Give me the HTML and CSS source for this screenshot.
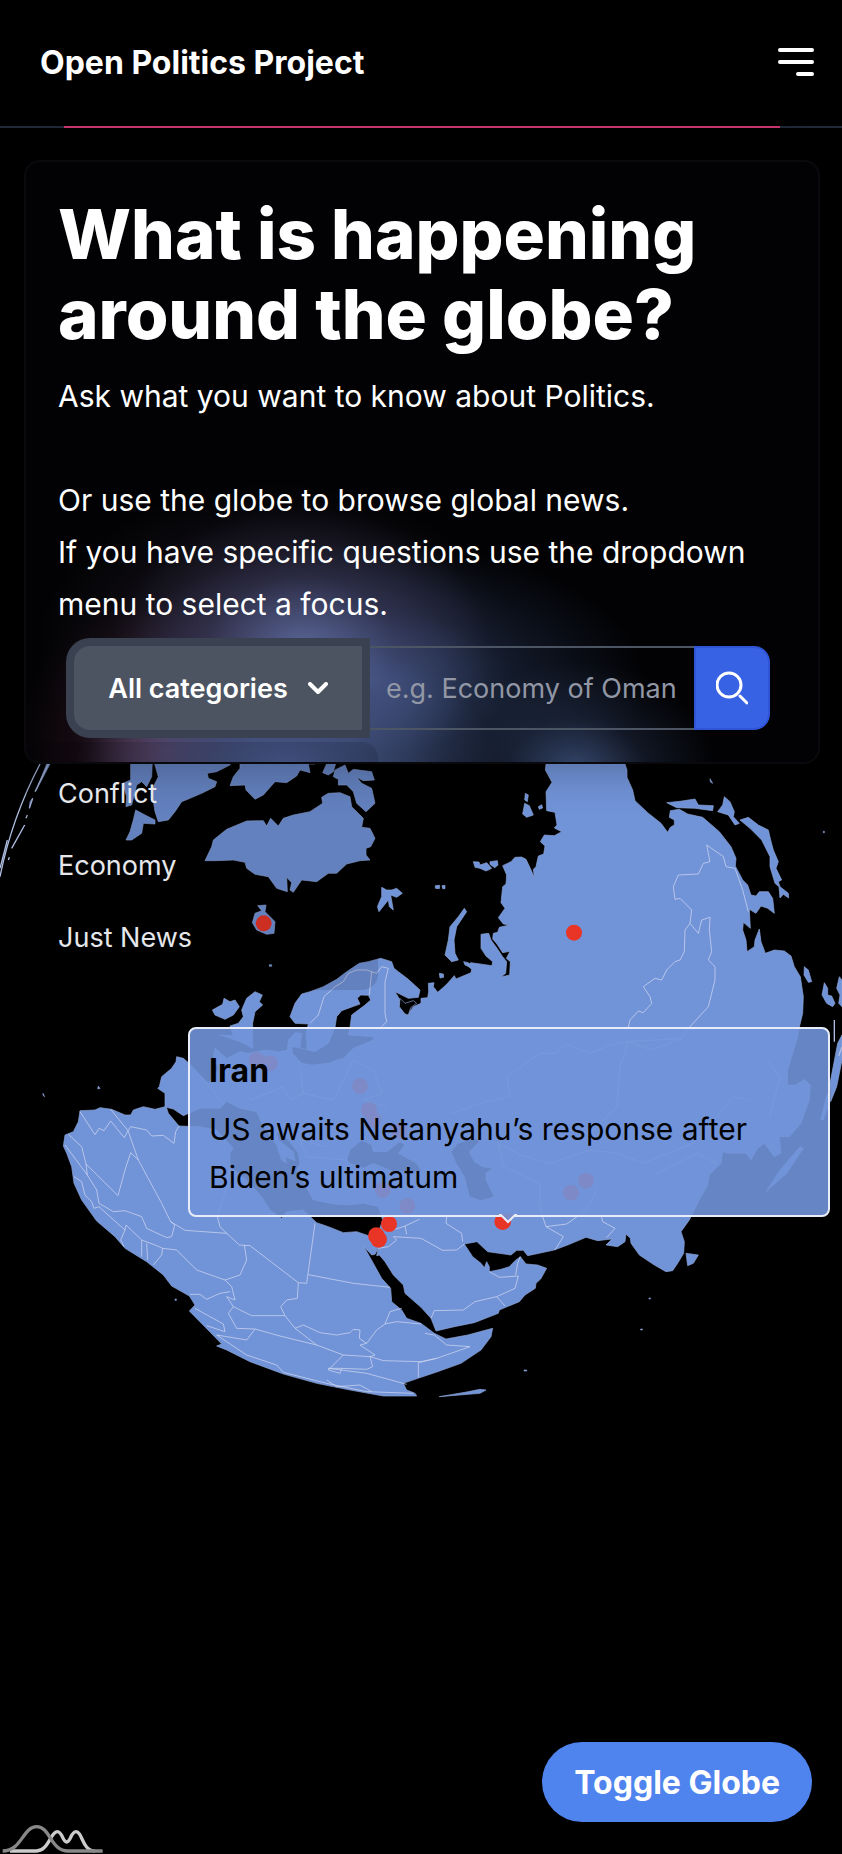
FILE: index.html
```html
<!DOCTYPE html>
<html lang="en">
<head>
<meta charset="utf-8">
<meta name="viewport" content="width=device-width, initial-scale=1">
<title>Open Politics Project</title>
<link rel="stylesheet" href="styles.css">
</head>
<body>
<header class="topbar">
  <a class="brand" href="#">Open Politics Project</a>
  <button class="menu-button" type="button" aria-label="Open menu">
    <svg width="36" height="28" viewBox="0 0 36 28" fill="none" stroke="#fff" stroke-width="4" stroke-linecap="round"><path d="M2 2H34M2 14H34M20 26H34"/></svg>
  </button>
</header>

<main class="stage">
  <svg class="globe" viewBox="0 0 2526 2040" role="img" aria-label="World globe with news locations">
    <g class="land">
      <path d="M1638 40L1638 72L1636 90L1656 127L1638 155L1640 212L1665 217L1671 255L1663 264L1685 275L1663 287L1633 285L1621 305L1635 318L1631 342L1615 348L1608 380L1600 388L1603 413L1591 385L1578 358L1565 351L1545 352L1533 365L1508 377L1520 405L1518 432L1508 440L1503 488L1515 505L1495 533L1510 552L1528 555L1498 562L1493 577L1480 580L1478 597L1491 612L1508 638L1530 634L1519 655L1531 665L1529 705L1503 711L1517 700L1520 665L1508 650L1491 625L1473 600L1466 580L1443 583L1443 625L1458 648L1478 665L1476 677L1413 668L1400 675L1415 688L1413 698L1368 717L1363 707L1338 735L1313 757L1300 740L1302 728L1285 730L1286 755L1283 773L1263 775L1263 790L1240 800L1222 825L1200 800L1200 780L1185 755L1225 775L1255 772L1260 750L1225 718L1195 695L1182 685L1175 665L1142 655L1105 665L1078 670L1040 695L1010 718L970 740L930 755L905 762L885 790L870 830L885 850L925 852L918 880L922 935L900 925L905 880L885 878L865 900L862 930L835 935L800 930L770 935L745 940L720 935L700 945L680 955L645 925L640 950L655 980L650 1000L625 1030L565 968L550 955L530 950L528 965L515 985L485 1010L478 1040L473 1045L495 1060L495 1100L465 1108L430 1100L400 1110L392 1125L375 1125L335 1108L300 1103L285 1110L240 1112L235 1145L220 1175L195 1185L190 1218L200 1240L215 1280L222 1330L245 1380L290 1443L345 1490L375 1525L440 1565L490 1605L515 1638L568 1668L585 1695L568 1713L632 1778L665 1812L650 1818L680 1830L750 1865L850 1902L950 1930L1050 1950L1150 1968L1250 1968L1245 1960L1220 1950L1210 1930L1263 1912L1313 1895L1383 1870L1443 1830L1473 1790L1478 1765L1403 1785L1338 1797L1303 1780L1263 1750L1220 1735L1205 1710L1175 1685L1172 1645L1145 1615L1120 1570L1092 1520L1115 1545L1125 1543L1135 1525L1130 1547L1138 1545L1155 1565L1180 1605L1210 1635L1215 1660L1263 1702L1293 1735L1308 1773L1363 1760L1423 1748L1495 1720L1498 1710L1558 1685L1575 1665L1606 1645L1608 1630L1622 1617L1640 1585L1613 1575L1578 1572L1561 1550L1545 1562L1528 1580L1503 1588L1468 1595L1468 1580L1460 1565L1453 1583L1443 1570L1418 1550L1393 1512L1431 1505L1463 1535L1533 1545L1550 1531L1570 1531L1583 1547L1663 1530L1703 1515L1758 1492L1793 1502L1836 1497L1818 1515L1853 1520L1875 1505L1878 1482L1891 1495L1893 1510L1918 1545L1963 1575L1998 1595L2018 1592L2033 1570L2051 1540L2053 1505L2043 1475L2068 1440L2073 1430L2098 1380L2123 1335L2128 1305L2163 1270L2168 1235L2183 1240L2238 1240L2253 1260L2273 1225L2293 1210L2323 1250L2343 1240L2338 1190L2368 1190L2403 1150L2428 1080L2431 1035L2413 1018L2388 1035L2363 1035L2363 990L2393 890L2398 862L2408 820L2410 770L2401 710L2383 680L2373 648L2353 633L2323 630L2296 640L2283 605L2278 567L2265 600L2263 620L2241 635L2238 600L2228 570L2230 547L2251 565L2248 508L2268 520L2283 498L2303 505L2323 520L2318 475L2305 455L2278 455L2268 468L2253 465L2243 435L2228 420L2206 378L2208 355L2193 320L2158 275L2108 232L2063 222L2038 208L2011 212L2008 232L2023 240L2023 255L2011 262L2003 277L1983 250L1943 218L1905 182L1898 150L1881 112L1881 90L1875 72L1875 40Z"/>
      <path d="M615 362L635 320L640 300L680 268L740 243L790 242L800 258L812 235L835 258L850 235L880 225L930 215L968 190L965 172L985 160L1020 158L1050 170L1055 200L1090 235L1085 262L1110 265L1125 295L1112 320L1098 325L1098 345L1110 360L1080 362L1040 372L1010 400L985 400L950 425L905 420L880 457L870 450L875 428L860 412L862 455L830 445L805 410L765 403L740 385L735 367L700 360L650 362Z"/>
      <path d="M464 40H700L690 75L650 95L622 100L625 115L650 125L645 140L605 160L570 175L545 185L525 215L505 240L475 245L465 215L455 150L475 110L464 72Z"/>
      <path d="M392 40H458L455 110L440 140L425 125L410 135L395 195L378 200L380 170L368 130L392 120ZM407 210L435 225L465 240L465 252L430 250L425 280L395 300L378 300L390 275L400 240Z"/>
      <path d="M720 40H955L945 72L925 72L930 98L900 90L890 108L860 128L825 125L790 165L765 178L738 150L735 135L690 137L700 110L720 85ZM985 60H1010L1000 95L985 105L968 98ZM1005 90L1035 75L1045 100L1060 88L1115 95L1123 120L1090 122L1070 112L1085 130L1115 145L1125 190L1098 215L1070 190L1060 155L1040 135L1015 135L1015 118L1000 110Z"/>
      <path d="M773 497L798 495L795 515L805 525L825 545L822 580L800 583L770 570L757 548L765 520L785 512ZM1145 442L1160 450L1175 450L1190 445L1207 460L1190 472L1172 465L1180 510L1168 500L1165 480L1137 515L1132 500L1145 470Z"/>
      <path d="M637 810L668 793L672 775L690 785L705 780L718 800L700 825L675 838L645 825ZM740 775L765 755L787 765L778 785L788 795L765 815L758 850L758 925L720 905L660 885L700 887L690 858L715 850L730 830L725 810Z"/>
      <path d="M1393 505L1400 515L1370 560L1362 600L1365 640L1375 660L1355 665L1335 645L1345 600L1350 560L1375 530ZM1391 665L1405 668L1408 680L1395 675ZM1420 365L1437 366L1440 375L1460 368L1475 385L1458 393L1440 385L1425 382ZM1470 365L1492 362L1494 375L1484 383L1470 373ZM1576 160L1585 165L1582 185L1574 180ZM1574 190L1588 197L1600 225L1580 232L1568 222ZM1615 200L1625 194L1628 204L1618 208ZM1306 437L1319 436L1318 446L1306 445ZM1326 437L1335 436V446H1328ZM1318 700L1330 702L1331 712L1320 714Z"/>
      <path d="M2000 188L2040 184L2085 177L2095 195L2140 197L2138 212L2085 205L2030 203ZM2173 170L2190 185L2203 215L2200 230L2218 250L2205 255L2185 225L2153 215L2168 195ZM2220 240L2245 232L2275 255L2305 270L2312 300L2320 330L2335 365L2328 385L2345 420L2335 425L2340 440L2365 460L2366 474L2350 463L2340 474L2337 440L2325 430L2310 380L2310 350L2285 300L2250 265ZM2130 116L2138 130L2131 126ZM2058 1540L2095 1545L2080 1570L2063 1577Z"/>
      <path d="M2413 680L2425 690L2435 725L2425 727L2412 705ZM2473 728L2483 745L2483 765L2495 768L2505 790L2498 800L2480 790L2466 765ZM2518 710L2526 720V800L2516 790L2520 765L2510 745ZM2513 910L2526 885V960L2510 1040L2492 1085L2490 1030ZM1318 1970L1400 1956L1440 1948L1458 1950L1440 1960ZM2298 1355L2340 1290L2400 1220L2410 1225L2360 1300ZM2462 1140L2482 1060L2488 1090L2470 1140Z"/>
      <path d="M140 72L150 72L108 152ZM98 175L88 205L90 185ZM295 1038L300 1046L293 1046ZM129 1060L134 1070L129 1066ZM808 674H815V679H808ZM525 1677H529V1681H525ZM1947 1674H1951V1677H1947ZM1922 1767H1927V1770H1922ZM1572 1890H1580V1893H1572ZM2470 274H2473V278H2470Z"/>
    </g>
    <g class="sea">
      <path d="M499 1102L520 1107L550 1127L600 1105L660 1105L680 1085L720 1105L770 1115L790 1160L830 1215L845 1260L860 1270L855 1250L885 1262L880 1235L835 1200L830 1178L850 1180L895 1240L900 1270L890 1290L940 1380L1000 1392L1050 1395L1090 1390L1135 1400L1148 1440L1135 1478L1105 1487L1070 1475L1030 1478L985 1460L950 1448L910 1410L860 1415L845 1435L810 1410L785 1370L740 1320L690 1280L690 1240L700 1225L650 1170L600 1160L537 1158L505 1120Z"/>
      <path d="M1040 1260L1050 1230L1085 1200L1115 1215L1120 1235L1160 1235L1200 1205L1215 1215L1195 1240L1250 1270L1265 1295L1180 1295L1120 1270L1090 1285L1050 1270ZM1353 1235L1373 1210L1428 1195L1438 1205L1408 1235L1423 1265L1448 1280L1478 1285L1458 1300L1458 1320L1483 1370L1443 1382L1408 1370L1393 1310L1368 1270Z"/>
      <path d="M1005 862L1010 830L1025 812L1080 792L1072 775L1082 765L1105 766L1112 780L1095 795L1055 825L1050 862L1045 885L1120 890L1120 900L1060 925L1030 955L1010 960L985 970L935 975L905 970L878 940L875 920L905 925L945 935L985 910Z"/>
      <path d="M1200 775L1215 790L1240 782L1250 790L1232 803L1225 825L1215 822L1198 800Z"/>
    </g>
    <g class="coast">
      <path d="M120 72Q35 235 0 410M145 72L105 155M98 175L88 205M82 225L78 235M74 255L35 325M28 352L25 360M22 300L0 385M2503 840V905M2526 920L2516 948"/>
    </g>
    <g class="borders">
      <path d="M240 1115L285 1184L297 1165L312 1172L332 1143L373 1193L384 1172L332 1108M384 1172L392 1160L440 1170L455 1188L490 1186L522 1210L527 1175L537 1158M384 1172L415 1260L485 1390L512 1445L555 1471L680 1480L718 1515L750 1517L895 1628L920 1630L945 1450M415 1260L392 1238L375 1290L354 1367L258 1272L245 1220L205 1183M258 1272L262 1305L290 1350L297 1390L340 1415L375 1412L425 1430L440 1465L500 1493L515 1490L524 1455L512 1445M195 1215L262 1305M222 1310L245 1325L255 1365L275 1385L282 1405L297 1400M297 1400L330 1430L375 1470L378 1455L425 1500L465 1515L488 1525L485 1545L460 1575M425 1500L425 1550M440 1510L443 1560M375 1470L362 1500L372 1520M488 1525L530 1530L590 1590L675 1620L720 1605L740 1560L733 1515M675 1620L695 1640L705 1680L680 1670L700 1700L755 1727L855 1727L842 1700L860 1680L892 1675L895 1628M570 1663L600 1663L620 1678L660 1660L690 1655M925 1604L1060 1630L1170 1642M855 1727L885 1765L910 1755L960 1778L1010 1785L1050 1778L1060 1768L1080 1770L1078 1795L1100 1810L1130 1770L1155 1752L1170 1715L1205 1705M1155 1752L1190 1745L1263 1752M885 1765L950 1815L1030 1845L1110 1850L1150 1862L1263 1865L1310 1855L1410 1820L1340 1815L1303 1785L1275 1780M1100 1810L1080 1815L1125 1845L1110 1850M585 1705L670 1752L675 1775L620 1757M700 1700L685 1720L710 1765L765 1767L840 1788L950 1815M765 1767L740 1800L650 1785L740 1845L830 1875L850 1897L980 1930L1100 1955L1240 1960M1030 1845L985 1890L1020 1900L1025 1885L985 1885L1100 1900L1220 1933M1110 1850L1118 1880L1100 1888L1025 1885M1255 1912V1868L1310 1855M980 1920L1010 1940L1080 1935L1115 1955M652 1430L660 1460L680 1480M652 1430L680 1340L690 1280"/>
      <path d="M1135 1525L1165 1520L1190 1500L1180 1490L1263 1495L1328 1531L1370 1530L1393 1512M1165 1475L1215 1458L1220 1483M1215 1458L1258 1438M1340 1430L1338 1450L1385 1480L1388 1505M1293 1735L1303 1712L1390 1710L1425 1685L1490 1670L1545 1645L1555 1608L1498 1612L1468 1595M1490 1670L1515 1698M1547 1605L1553 1570L1561 1550M1615 1390L1638 1460L1690 1490L1665 1530M1638 1460L1700 1452L1760 1410L1790 1350M1805 1432L1808 1445L1845 1465L1820 1493"/>
      <path d="M930 850L955 825L972 770L1005 740L1030 725L1045 700L1070 690L1100 690L1115 695L1108 765M1115 695L1130 700L1145 680L1165 685L1155 725L1155 820L1160 845L1145 860M1885 862L1890 840L1915 813L1930 818L1955 790L1950 770L1930 740L1965 715L1985 720L2000 690L2025 665L2040 660L2053 635L2055 570L2070 550L2075 510L2040 475L2025 478L2020 440L2035 405L2095 402L2110 370L2130 365L2120 315L2170 350L2178 380L2205 385L2228 450L2245 515M2070 550L2095 580L2105 540L2130 532L2128 570L2135 635L2125 660L2145 680L2145 720L2125 800L2070 860L2045 895L1955 930L1885 905L1830 915L1770 940L1695 912L1670 940L1620 940L1520 1010L1530 1070L1440 1090L1355 1120M1885 905L1860 980L1850 1100L1770 1180L1700 1170M2045 895L1885 905M1495 1210L1560 1245L1650 1270L1770 1230L1850 1240L1930 1270L2080 1210L2160 1120L2200 1070L2250 1080M1495 1210L1510 1280L1620 1330L1620 1400M1970 1300L2090 1240L2150 1270M900 980L910 1060L870 1080L850 1040M910 1060L1000 1080L1060 960L1120 990L1145 1060L1090 1080L1160 1100M620 1030L670 1090M750 1080L850 1040M2300 960L2340 1010L2310 1130M1040 1260L920 1250L900 1200L980 1220"/>
    </g>
    <g class="pins">
      <circle cx="791" cy="550" r="24"/><circle cx="1722" cy="578" r="24"/>
      <circle cx="1167" cy="1452" r="24"/><circle cx="1129" cy="1487" r="25"/><circle cx="1136" cy="1498" r="25"/>
      <circle cx="1508" cy="1445" r="25"/>
      <circle cx="770" cy="960" r="24"/><circle cx="810" cy="970" r="24"/><circle cx="1080" cy="1038" r="24"/><circle cx="1107" cy="1110" r="24"/><circle cx="1120" cy="1140" r="24"/><circle cx="1198" cy="1172" r="24"/><circle cx="1148" cy="1350" r="24"/><circle cx="1222" cy="1398" r="24"/><circle cx="1713" cy="1358" r="24"/><circle cx="1758" cy="1322" r="24"/>
    </g>
  </svg>

  <section class="card">
    <h1 class="headline">What is happening around the globe?</h1>
    <p class="lead">Ask what you want to know about Politics.</p>
    <p class="lead lead-more">Or use the globe to browse global news.<br>If you have specific questions use the dropdown menu to select a focus.</p>
    <form class="search">
      <button class="category" type="button" aria-expanded="true" aria-controls="categories">
        <span>All categories</span>
        <svg width="20" height="12" viewBox="0 0 20 12" fill="none" stroke="#fff" stroke-width="4" stroke-linecap="round" stroke-linejoin="round"><path d="M2 2L10 10L18 2"/></svg>
      </button>
      <input class="query" type="text" aria-label="Search question" placeholder="e.g. Economy of Oman">
      <button class="submit" type="submit" aria-label="Search">
        <svg width="32" height="34" viewBox="0 0 32 34" fill="none" stroke="#fff" stroke-width="3" stroke-linecap="round"><circle cx="13" cy="14" r="12"/><path d="M24 25L31 32"/></svg>
      </button>
    </form>
    <ul class="categories" id="categories">
      <li><a href="#">Conflict</a></li>
      <li><a href="#">Economy</a></li>
      <li><a href="#">Just News</a></li>
    </ul>
  </section>

  <aside class="tip" role="tooltip">
    <h2 class="tip-title">Iran</h2>
    <p class="tip-text">US awaits Netanyahu’s response after Biden’s ultimatum</p>
    <svg class="tip-arrow" width="18" height="11" viewBox="0 0 18 11"><path d="M0 0H18L9 9Z" fill="#7b8cc9"/><path d="M0 1H2L9 8L16 1H18" fill="none" stroke="#e8edf9" stroke-width="2"/></svg>
  </aside>
</main>

<footer class="bottom">
  <svg class="chart-logo" width="104" height="31" viewBox="0 0 312 93" fill="none" stroke-width="10" role="img" aria-label="Chart credit"><path stroke="#ccc" d="M30 84H110C145 84 152 26 172 26C187 26 188 57 200 57C212 57 213 26 228 26C248 26 246 84 285 84"/><path stroke="#888" d="M8 84C66 84 68 11 110 11C152 11 150 84 205 84H308"/></svg>
  <button class="toggle" type="button">Toggle Globe</button>
</footer>
</body>
</html>
```
FILE: styles.css
```css
* { box-sizing: border-box; }

body {
  margin: 0;
  min-height: 100vh;
  display: flex;
  flex-direction: column;
  position: relative;
  overflow-x: hidden;
  background: #000;
  color: #fff;
  font-family: Inter, "Liberation Sans", sans-serif;
  font-size: 30px;
}

button, input { font: inherit; color: inherit; }
button { cursor: pointer; }
a { color: inherit; text-decoration: none; }

.topbar {
  position: relative;
  display: flex;
  align-items: center;
  justify-content: space-between;
  height: 128px;
  padding: 0 28px 2px 40px;
  border-bottom: 2px solid #1f2937;
}
.topbar::after {
  content: "";
  position: absolute;
  left: 64px;
  right: 62px;
  bottom: -2px;
  height: 2px;
  background: #c9366f;
}
.brand { font-size: 32px; font-weight: 700; }
.menu-button {
  display: flex;
  padding: 0;
  border: 0;
  background: none;
}

.stage {
  position: relative;
  flex: 1;
  padding: 32px 22px 0 24px;
}

.globe {
  position: absolute;
  left: 0;
  top: 612px;
  width: 100%;
}
.land { fill: #7193d8; stroke: #8ea6d8; stroke-width: 2; }
.sea { fill: #000; stroke: #8ea6d8; stroke-width: 2; }
.coast { fill: none; stroke: #aebde0; stroke-width: 4; }
.borders { fill: none; stroke: #cdd6ef; stroke-width: 3; stroke-opacity: .75; stroke-linejoin: round; }
.pins { fill: #e93526; }

.card {
  position: relative;
  padding: 32px 32px 32px;
  border: 2px solid #0a0a0e;
  border-radius: 16px;
  box-shadow: 0 8px 40px rgba(0, 0, 0, .25);
  background:
    radial-gradient(ellipse 190px 140px at 275px 485px, rgba(108, 122, 180, .7), rgba(86, 86, 136, .3) 50%, transparent),
    radial-gradient(ellipse 270px 140px at 350px 520px, rgba(66, 92, 146, .75), rgba(50, 70, 112, .35) 50%, transparent),
    radial-gradient(ellipse 140px 110px at 550px 610px, rgba(64, 84, 128, .85), rgba(40, 54, 84, .4) 50%, transparent),
    radial-gradient(ellipse 210px 130px at 260px 605px, rgba(78, 98, 152, 1), rgba(64, 80, 122, .6) 60%, transparent),
    radial-gradient(ellipse 150px 160px at 140px 590px, rgba(150, 76, 110, .7), rgba(80, 38, 58, .3) 50%, transparent),
    radial-gradient(ellipse 240px 170px at 250px 490px, rgba(80, 64, 90, .4), transparent),
    #020204;
}
.headline {
  margin: 0;
  font-size: 69px;
  line-height: 80px;
  font-weight: 800;
}
.lead {
  margin: 16px 0 0;
  line-height: 52px;
}
.lead-more { margin-top: 52px; }

.search {
  display: flex;
  height: 84px;
  margin: 16px 16px 0;
}
.category {
  position: relative;
  flex: none;
  display: flex;
  align-items: center;
  justify-content: center;
  gap: 20px;
  width: 288px;
  padding: 0;
  border: 0;
  border-radius: 16px 0 0 16px;
  background: #4d5461;
  box-shadow: 0 0 0 8px #3a4150;
  font-size: 27px;
  font-weight: 600;
}
.query {
  flex: 1;
  min-width: 0;
  padding: 0 8px 0 24px;
  border: 2px solid #4b5563;
  border-width: 2px 0;
  border-radius: 0;
  background: none;
  appearance: none;
  font-size: 27px;
}
.query::placeholder { color: #9197a5; opacity: 1; }
.submit {
  display: grid;
  place-items: center;
  flex: none;
  width: 76px;
  padding: 0;
  border: 2px solid #2f55d6;
  border-radius: 0 16px 16px 0;
  background: #3862e4;
}

.categories {
  position: absolute;
  left: 0;
  top: 580px;
  width: 352px;
  margin: 0;
  padding: 16px 0;
  list-style: none;
  border-radius: 16px;
  background: rgba(4, 4, 12, .12);
  font-size: 27px;
  color: #e5e7eb;
}
.categories a {
  display: block;
  padding: 0 32px;
  line-height: 72px;
}

.tip {
  position: absolute;
  right: 12px;
  top: 899px;
  width: 642px;
  max-width: 96%;
  padding: 18px 19px 14px;
  border: 2px solid #e8edf9;
  border-radius: 8px;
  background: rgba(113, 147, 217, .9);
  color: #000;
}
.tip-title {
  margin: 0 0 10px;
  font-size: 32px;
  line-height: 48px;
  font-weight: 700;
}
.tip-text {
  margin: 0;
  font-size: 30px;
  line-height: 48px;
}
.tip-arrow {
  position: absolute;
  left: 309px;
  bottom: -10px;
}

.bottom {
  display: flex;
  align-items: flex-end;
  justify-content: space-between;
  padding: 0 30px 0 0;
}
.chart-logo { display: block; }
.toggle {
  height: 80px;
  margin-bottom: 32px;
  padding: 0 32px;
  border: 0;
  border-radius: 40px;
  background: #4f83ee;
  font-size: 32px;
  font-weight: 700;
}
```
